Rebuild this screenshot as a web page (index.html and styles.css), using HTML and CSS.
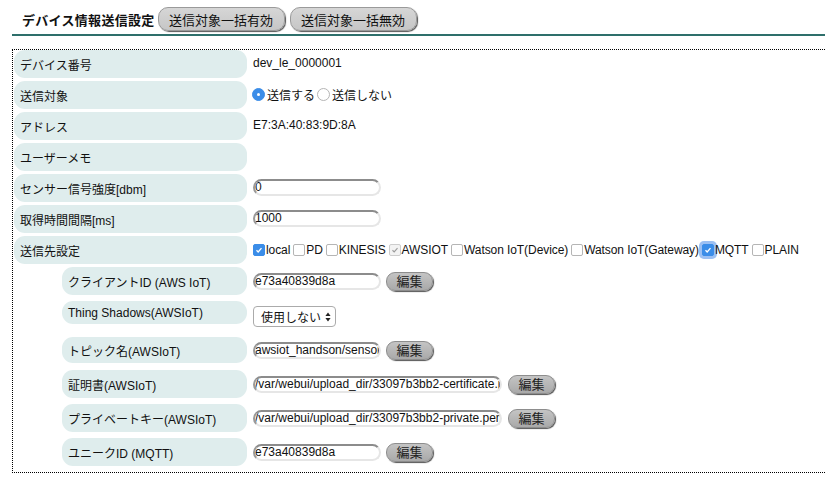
FILE: index.html
```html
<!DOCTYPE html>
<html lang="ja">
<head>
<meta charset="utf-8">
<title>デバイス情報送信設定</title>
<link rel="stylesheet" href="styles.css">
</head>
<body>
<div class="head">
  <h1 class="title">デバイス情報送信設定</h1>
  <button class="hbtn">送信対象一括有効</button>
  <button class="hbtn">送信対象一括無効</button>
</div>
<div class="box">
  <div class="row"><div class="lbl">デバイス番号</div><div class="val">dev_le_0000001</div></div>
  <div class="row"><div class="lbl">送信対象</div>
    <div class="val radios">
      <span class="radio on"></span><span class="rtxt">送信する</span>
      <span class="radio"></span><span class="rtxt">送信しない</span>
    </div>
  </div>
  <div class="row"><div class="lbl">アドレス</div><div class="val">E7:3A:40:83:9D:8A</div></div>
  <div class="row"><div class="lbl">ユーザーメモ</div><div class="val"></div></div>
  <div class="row"><div class="lbl">センサー信号強度[dbm]</div><div class="val"><input class="inp" type="text" value="0"></div></div>
  <div class="row"><div class="lbl">取得時間間隔[ms]</div><div class="val"><input class="inp" type="text" value="1000"></div></div>
  <div class="row"><div class="lbl">送信先設定</div>
    <div class="val checks">
      <span class="cb on"><svg viewBox="0 0 12 12"><path d="M3 6.3l2 2 4-4.6" fill="none" stroke="#fff" stroke-width="1.6"/></svg></span><span class="ctxt">local</span>
      <span class="cb"></span><span class="ctxt">PD</span>
      <span class="cb"></span><span class="ctxt">KINESIS</span>
      <span class="cb dis"><svg viewBox="0 0 12 12"><path d="M3 6.3l2 2 4-4.6" fill="none" stroke="#9a9a9a" stroke-width="1.3"/></svg></span><span class="ctxt">AWSIOT</span>
      <span class="cb"></span><span class="ctxt">Watson IoT(Device)</span>
      <span class="cb"></span><span class="ctxt">Watson IoT(Gateway)</span>
      <span class="cb on focus"><svg viewBox="0 0 12 12"><path d="M3 6.3l2 2 4-4.6" fill="none" stroke="#fff" stroke-width="1.6"/></svg></span><span class="ctxt">MQTT</span>
      <span class="cb"></span><span class="ctxt">PLAIN</span>
    </div>
  </div>

  <div class="row sub gap6"><div class="lbl">クライアントID (AWS IoT)</div>
    <div class="val"><input class="inp" type="text" value="e73a40839d8a"><button class="ebtn">編集</button></div></div>
  <div class="row sub thing"><div class="lbl">Thing Shadows(AWSIoT)</div>
    <div class="val"><span class="sel">使用しない<svg class="arr" viewBox="0 0 6 10"><path d="M3 0.5L5.6 4H0.4z M3 9.5L5.6 6H0.4z" fill="#222"/></svg></span></div></div>
  <div class="row sub topic"><div class="lbl">トピック名(AWSIoT)</div>
    <div class="val"><input class="inp" type="text" value="awsiot_handson/sensor"><button class="ebtn">編集</button></div></div>
  <div class="row sub gap6"><div class="lbl">証明書(AWSIoT)</div>
    <div class="val"><input class="inp long" type="text" value="/var/webui/upload_dir/33097b3bb2-certificate.pem"><button class="ebtn">編集</button></div></div>
  <div class="row sub gap6"><div class="lbl">プライベートキー(AWSIoT)</div>
    <div class="val"><input class="inp long" type="text" value="/var/webui/upload_dir/33097b3bb2-private.pem.key"><button class="ebtn">編集</button></div></div>
  <div class="row sub last"><div class="lbl">ユニークID (MQTT)</div>
    <div class="val"><input class="inp" type="text" value="e73a40839d8a"><button class="ebtn">編集</button></div></div>
</div>
</body>
</html>
```
FILE: styles.css
```css
html, body {
  margin: 0;
  padding: 0;
  background: #fff;
  overflow: hidden;
}
body {
  font-family: "Liberation Sans", "Noto Sans CJK JP", sans-serif;
  font-size: 12px;
  color: #111;
}
.head {
  display: flex;
  align-items: center;
  margin-left: 12px;
  padding: 7px 0 3px 10px;
  height: 24px;
  border-bottom: 2px solid #2e6f6b;
}
.title {
  margin: 0 3px 0 0;
  font-size: 13px;
  font-weight: bold;
  font-family: "Noto Sans CJK JP", sans-serif;
  color: #111;
  letter-spacing: 0.3px;
}
.hbtn {
  height: 24px;
  width: 127px;
  margin-right: 5px;
  padding: 0;
  border: 1px solid #9a9a9a;
  border-radius: 10px;
  background: linear-gradient(#d6d6d6, #c6c6c6);
  box-shadow: 1px 1px 1px #555;
  font-family: "Noto Sans CJK JP", sans-serif;
  font-size: 13px;
  line-height: 1;
  color: #111;
}
.box {
  margin: 13px 0 0 12px;
  border: 1px dotted #000;
  border-right: none;
  padding: 0 0 6px 1px;
}
.row {
  display: flex;
  align-items: center;
  margin-bottom: 3px;
}
.lbl {
  box-sizing: border-box;
  flex: none;
  width: 233px;
  height: 28px;
  display: flex;
  align-items: center;
  padding-left: 6px;
  border-radius: 11px;
  background: #dfeded;
  color: #111;
}
.val {
  margin-left: 6px;
  display: flex;
  align-items: center;
  margin-top: -2px;
}
.sub {
  margin-left: 48px;
}
.sub .lbl {
  width: 185px;
}
.sub .val {
  margin-top: 0;
}
.gap6 { margin-bottom: 6px; }
.thing {
  align-items: flex-start;
  height: 36px;
  margin-bottom: 0;
}
.thing .lbl { height: 23px; }
.topic { margin-bottom: 7px; }
.topic .lbl { height: 26px; }
.last { margin-bottom: 0; }

.radios { margin-left: 5px; }
.radio {
  box-sizing: border-box;
  width: 13px;
  height: 13px;
  border-radius: 50%;
  border: 1px solid #b5b5b5;
  background: #fff;
  margin-right: 2px;
  position: relative;
}
.radio.on {
  border-color: #3b8de8;
  background: #3b8de8;
}
.radio.on::after {
  content: "";
  position: absolute;
  left: 4px;
  top: 4px;
  width: 3px;
  height: 3px;
  border-radius: 50%;
  background: #fff;
}
.rtxt { margin-right: 2px; }

.checks { margin-left: 6px; margin-top: 0; }
.cb {
  box-sizing: border-box;
  width: 12px;
  height: 12px;
  border: 1px solid #b5b5b5;
  border-radius: 2px;
  background: #fff;
  margin-right: 1px;
  display: inline-flex;
}
.cb svg { width: 10px; height: 10px; }
.cb.on {
  background: #3b8de8;
  border-color: #3b8de8;
}
.cb.dis {
  background: #f3f3f3;
  border-color: #cdcdcd;
}
.cb.focus {
  box-shadow: 0 0 0 3px rgba(90, 150, 235, 0.6);
}
.ctxt { margin-right: 3px; letter-spacing: -0.08px; }

.inp {
  box-sizing: border-box;
  width: 128px;
  height: 17px;
  padding: 0;
  border: 2px solid #e6e6e6;
  border-top-color: #8c8c8c;
  border-left-color: #9a9a9a;
  border-radius: 9px;
  font-family: "Liberation Sans", sans-serif;
  font-size: 12px;
  color: #111;
  background: #fff;
  outline: none;
}
.inp.long { width: 249px; }
.ebtn {
  box-sizing: border-box;
  width: 47px;
  height: 19px;
  margin-left: 5px;
  padding: 0 0 1px;
  border: 1px solid #8d8d8d;
  border-radius: 9px;
  background: linear-gradient(#c4c4c4, #a9a9a9);
  box-shadow: 1px 1px 1px #555;
  font-family: "Noto Sans CJK JP", sans-serif;
  font-size: 13px;
  line-height: 1;
  color: #222;
}
.inp.long + .ebtn { margin-left: 6px; }
.sel {
  box-sizing: border-box;
  margin-top: 5px;
  width: 83px;
  height: 21px;
  display: flex;
  align-items: center;
  padding-left: 7px;
  border: 1px solid #ababab;
  border-radius: 4px;
  background: #fff;
  font-family: "Noto Sans CJK JP", sans-serif;
  font-size: 12px;
  color: #111;
}
.arr {
  width: 6px;
  height: 10px;
  margin-left: 4px;
}
```
